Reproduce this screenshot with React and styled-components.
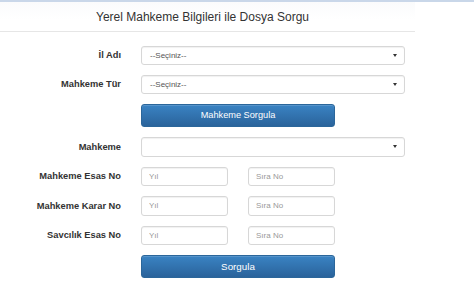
import React from 'react';
import styled, { createGlobalStyle } from 'styled-components';

const GlobalStyle = createGlobalStyle`
  html, body {
    margin: 0;
    padding: 0;
    background: #ffffff;
    font-family: "Liberation Sans", Arial, sans-serif;
  }
`;

const Page = styled.div`
  width: 474px;
  height: 285px;
  overflow: hidden;
  border-top: 2px solid #c9d7e9;
  box-sizing: border-box;
`;

const Panel = styled.div`
  width: 415px;
`;

const Header = styled.div`
  height: 29px;
  display: flex;
  align-items: center;
  justify-content: center;
  border-bottom: 1px solid #e6e6e6;
  background: linear-gradient(to bottom, #fafbfc, #ffffff 60%);
  font-size: 12px;
  color: #333;
  padding-right: 10px;
`;

const Form = styled.div`
  display: flex;
  flex-direction: column;
  padding-top: 13.5px;
`;

const Row = styled.div`
  display: grid;
  grid-template-columns: 121px 264px;
  column-gap: 20px;
  align-items: center;
  margin-bottom: 10px;
`;

const Label = styled.label`
  text-align: right;
  font-weight: bold;
  font-size: 9.3px;
  color: #333;
`;

const Select = styled.div`
  border: 1px solid #d7d7d7;
  border-radius: 3px;
  box-shadow: inset 0 1px 1px rgba(0, 0, 0, 0.06);
  display: flex;
  align-items: center;
  justify-content: space-between;
  padding: 0 7px 0 8px;
  font-size: 8px;
  color: #555;
  box-sizing: border-box;
  height: ${p => p.$h || 19}px;
`;

const Caret = styled.span`
  width: 0;
  height: 0;
  border-left: 2.5px solid transparent;
  border-right: 2.5px solid transparent;
  border-top: 3.5px solid #333;
`;

const Pair = styled.div`
  display: flex;
  gap: 20px;
`;

const Input = styled.input`
  width: 87px;
  height: 19.5px;
  box-sizing: border-box;
  border: 1px solid #d7d7d7;
  border-radius: 3px;
  box-shadow: inset 0 1px 1px rgba(0, 0, 0, 0.06);
  padding: 0 7px;
  font-family: inherit;
  font-size: 8px;
  outline: none;
  &::placeholder {
    color: #999;
  }
`;

const Button = styled.button`
  width: 194px;
  height: 23px;
  border: 1px solid #2b669a;
  border-radius: 3px;
  background: linear-gradient(to bottom, #3a83c3 0%, #2a639b 100%);
  color: #fff;
  font-family: inherit;
  font-size: ${p => p.$size || 9.2}px;
  padding: 0;
  box-shadow: inset 0 1px 0 rgba(255, 255, 255, 0.15);
`;

const Spacer = styled.div``;

export default function App() {
  return (
    <Page>
      <GlobalStyle />
      <Panel>
        <Header>Yerel Mahkeme Bilgileri ile Dosya Sorgu</Header>
        <Form>
          <Row>
            <Label>İl Adı</Label>
            <Select>--Seçiniz--<Caret /></Select>
          </Row>
          <Row>
            <Label>Mahkeme Tür</Label>
            <Select>--Seçiniz--<Caret /></Select>
          </Row>
          <Row>
            <Spacer />
            <Button>Mahkeme Sorgula</Button>
          </Row>
          <Row>
            <Label>Mahkeme</Label>
            <Select $h={20}><span /><Caret /></Select>
          </Row>
          <Row>
            <Label>Mahkeme Esas No</Label>
            <Pair>
              <Input placeholder="Yıl" />
              <Input placeholder="Sıra No" />
            </Pair>
          </Row>
          <Row>
            <Label>Mahkeme Karar No</Label>
            <Pair>
              <Input placeholder="Yıl" />
              <Input placeholder="Sıra No" />
            </Pair>
          </Row>
          <Row>
            <Label>Savcılık Esas No</Label>
            <Pair>
              <Input placeholder="Yıl" />
              <Input placeholder="Sıra No" />
            </Pair>
          </Row>
          <Row>
            <Spacer />
            <Button $size={9.8}>Sorgula</Button>
          </Row>
        </Form>
      </Panel>
    </Page>
  );
}
